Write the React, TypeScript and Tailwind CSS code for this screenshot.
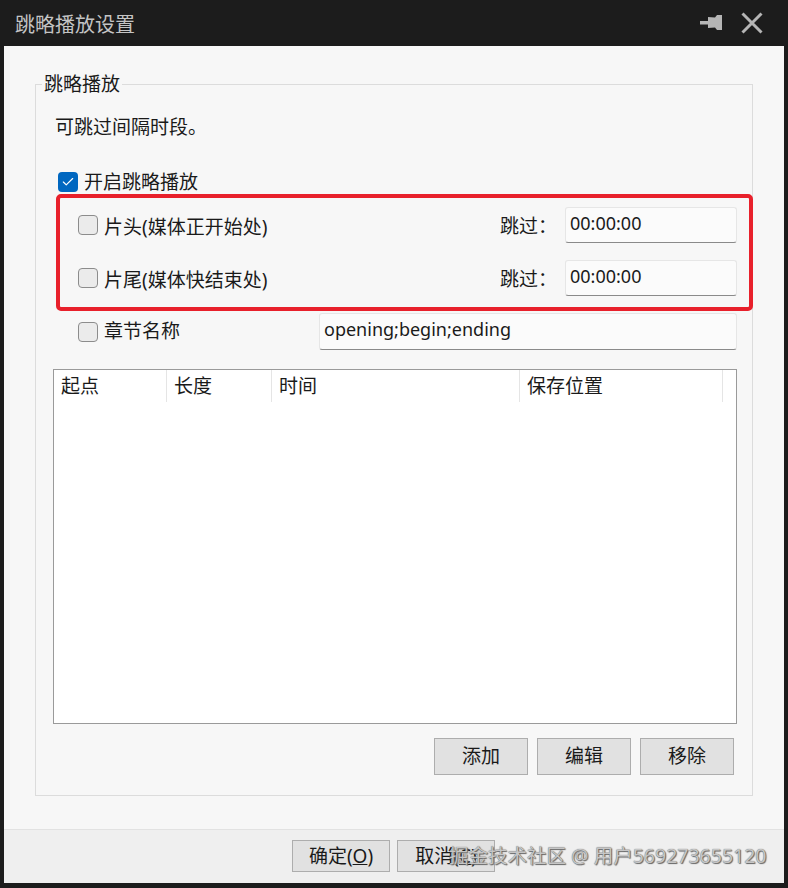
import { Check } from "lucide-react";

const font = "font-['Noto_Sans','Noto_Sans_CJK_SC',sans-serif]";

export default function App() {
  return (
    <div className={`w-[788px] h-[888px] bg-[#1c1c1c] flex flex-col px-[4px] pb-[5px] ${font}`}>
      {/* Title bar */}
      <div className="h-[46px] flex items-center justify-between pl-[11px] pr-[21px] shrink-0">
        <span className="mt-[4px] text-[20px] text-[#c4c4c4] leading-none">跳略播放设置</span>
        <div className="flex items-center gap-[19px]">
          <svg width="22" height="16" viewBox="0 0 22 16" className="text-[#b5b5b5]">
            <rect x="0" y="6" width="9" height="3.5" fill="currentColor" />
            <path d="M8 2 L15 2.5 L17 0 L22 0 L22 15 L17 15 L15 12.5 L8 13 Z" fill="currentColor" />
          </svg>
          <svg width="22" height="22" viewBox="0 0 22 22" className="text-[#b5b5b5]">
            <path d="M1.5 1.5 L20.5 20.5 M20.5 1.5 L1.5 20.5" stroke="currentColor" strokeWidth="3" />
          </svg>
        </div>
      </div>

      {/* Body */}
      <div className="flex-1 bg-[#f7f7f7] flex flex-col text-[#1a1a1a] text-[19px]">
        <div className="flex-1 pt-[38px] px-[31px]">
          {/* Group box */}
          <div className="relative border border-[#dcdcdc] h-[712px]">
            <span className="absolute -top-[13px] left-[6px] bg-[#f7f7f7] px-[2px] leading-[24px]">跳略播放</span>

            {/* Annotation frame */}
            <div className="absolute left-[20px] top-[109px] w-[697px] h-[117px] border-[4px] border-[#e8202b] rounded-[5px]" />

            <div className="pt-[30px] pl-[19px] leading-[24px]">可跳过间隔时段。</div>

            <div className="mt-[33px] ml-[22px] h-[20px] flex items-center gap-[6px]">
              <span className="w-[20px] h-[20px] rounded-[4px] bg-[#0067c0] flex items-center justify-center">
                <Check className="w-[14px] h-[14px] text-white" strokeWidth={2} />
              </span>
              <span className="leading-[20px]">开启跳略播放</span>
            </div>

            <div className="mt-[15px] flex flex-col gap-[17px] pl-[42px] pr-[15px]">
              <SkipRow label="片头(媒体正开始处)" />
              <SkipRow label="片尾(媒体快结束处)" />
              <div className="h-[37px] flex items-center">
                <Box />
                <span className="ml-[6px] w-[215px]">章节名称</span>
                <Field value="opening;begin;ending" className="flex-1 h-[37px]" />
              </div>
            </div>

            {/* List view */}
            <div className="mt-[19px] ml-[17px] w-[684px] h-[355px] border border-[#9a9a9a] bg-white">
              <div className="h-[32px] flex">
                <Col w="w-[113px]">起点</Col>
                <Col w="w-[105px]">长度</Col>
                <Col w="w-[248px]">时间</Col>
                <Col w="w-[203px]">保存位置</Col>
              </div>
            </div>

            <div className="mt-[14px] mr-[18px] flex justify-end gap-[9px]">
              <Btn>添加</Btn>
              <Btn>编辑</Btn>
              <Btn>移除</Btn>
            </div>
          </div>
        </div>

        {/* Footer */}
        <div className="relative h-[54px] shrink-0 bg-[#efefef] border-t border-[#e2e2e2] flex items-start pt-[10px] pl-[288px] gap-[7px]">
          <FooterBtn>
            确定(<span className="underline">O</span>)
          </FooterBtn>
          <FooterBtn>
            取消(<span className="underline">C</span>)
          </FooterBtn>
          <span className="absolute left-[445px] top-[11px] text-[19.5px] leading-[30px] text-[#c6c6c6] [text-shadow:0_0_1px_#555,1px_1px_1px_#666] whitespace-nowrap">
            掘金技术社区 @ 用户569273655120
          </span>
        </div>
      </div>
    </div>
  );
}

function Box() {
  return <span className="w-[20px] h-[20px] shrink-0 rounded-[4px] border border-[#8c8c8c] bg-[#ebebeb]" />;
}

function Field({ value, className = "" }: { value: string; className?: string }) {
  return (
    <div
      className={`bg-[#fbfbfb] border border-[#e6e6e6] border-b-[#8a8a8a] rounded-[3px] px-[4px] pt-[3px] leading-[24px] text-[18px] ${className}`}
    >
      {value}
    </div>
  );
}

function SkipRow({ label }: { label: string }) {
  return (
    <div className="h-[36px] flex items-center">
      <Box />
      <span className="ml-[6px] mt-[4px] flex-1">{label}</span>
      <span className="w-[65px] mt-[2px]">跳过：</span>
      <Field value="00:00:00" className="w-[172px] h-[36px]" />
    </div>
  );
}

function Col({ w, children }: { w: string; children: React.ReactNode }) {
  return (
    <div className={`${w} h-full border-r border-[#e5e5e5] pl-[7px] flex items-center`}>{children}</div>
  );
}

function Btn({ children }: { children: React.ReactNode }) {
  return (
    <button className="w-[94px] h-[37px] bg-[#e1e1e1] border border-[#adadad] text-[19px] text-[#1a1a1a]">
      {children}
    </button>
  );
}

function FooterBtn({ children }: { children: React.ReactNode }) {
  return (
    <button className="w-[98px] h-[32px] bg-[#e1e1e1] border border-[#adadad] text-[19px] leading-none text-[#1a1a1a]">
      {children}
    </button>
  );
}
